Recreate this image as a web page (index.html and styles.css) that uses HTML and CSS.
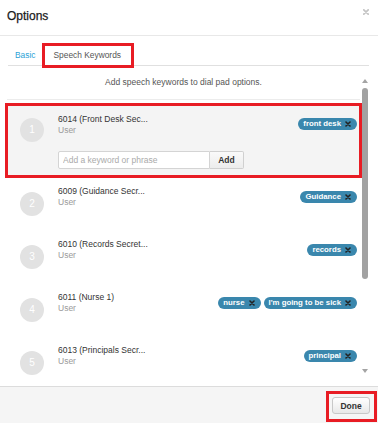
FILE: index.html
```html
<!DOCTYPE html>
<html lang="en">
<head>
<meta charset="utf-8">
<title>Options</title>
<link rel="stylesheet" href="styles.css">
</head>
<body>
<div class="modal">
  <header class="head">
    <h1 class="title">Options</h1>
    <button class="close" aria-label="Close">
      <svg width="6" height="6" viewBox="0 0 6 6"><path d="M0.8 0.8L5.2 5.2M5.2 0.8L0.8 5.2" stroke="#c4c4c4" stroke-width="1.7" stroke-linecap="round"/></svg>
    </button>
  </header>
  <div class="body">
    <nav class="tabs">
      <a class="tab" href="#">Basic</a>
      <a class="tab active" href="#">Speech Keywords</a>
    </nav>
    <div class="pane">
      <div class="list">
        <p class="desc">Add speech keywords to dial pad options.</p>

        <div class="row active">
          <div class="num">1</div>
          <div class="main">
            <div class="top">
              <div class="ident"><div class="name">6014 (Front Desk Sec...</div><div class="type">User</div></div>
              <div class="tags">
                <span class="tag">front desk<svg width="6" height="6" viewBox="0 0 6 6"><path d="M1 1L5 5M5 1L1 5" stroke="#222" stroke-width="1.6" stroke-linecap="round"/></svg></span>
              </div>
            </div>
            <div class="adder">
              <input class="kw" type="text" placeholder="Add a keyword or phrase">
              <button class="add">Add</button>
            </div>
          </div>
        </div>

        <div class="row">
          <div class="num">2</div>
          <div class="main">
            <div class="top">
              <div class="ident"><div class="name">6009 (Guidance Secr...</div><div class="type">User</div></div>
              <div class="tags">
                <span class="tag">Guidance<svg width="6" height="6" viewBox="0 0 6 6"><path d="M1 1L5 5M5 1L1 5" stroke="#222" stroke-width="1.6" stroke-linecap="round"/></svg></span>
              </div>
            </div>
          </div>
        </div>

        <div class="row">
          <div class="num">3</div>
          <div class="main">
            <div class="top">
              <div class="ident"><div class="name">6010 (Records Secret...</div><div class="type">User</div></div>
              <div class="tags">
                <span class="tag">records<svg width="6" height="6" viewBox="0 0 6 6"><path d="M1 1L5 5M5 1L1 5" stroke="#222" stroke-width="1.6" stroke-linecap="round"/></svg></span>
              </div>
            </div>
          </div>
        </div>

        <div class="row">
          <div class="num">4</div>
          <div class="main">
            <div class="top">
              <div class="ident"><div class="name">6011 (Nurse 1)</div><div class="type">User</div></div>
              <div class="tags">
                <span class="tag">nurse<svg width="6" height="6" viewBox="0 0 6 6"><path d="M1 1L5 5M5 1L1 5" stroke="#222" stroke-width="1.6" stroke-linecap="round"/></svg></span>
                <span class="tag">I'm going to be sick<svg width="6" height="6" viewBox="0 0 6 6"><path d="M1 1L5 5M5 1L1 5" stroke="#222" stroke-width="1.6" stroke-linecap="round"/></svg></span>
              </div>
            </div>
          </div>
        </div>

        <div class="row">
          <div class="num">5</div>
          <div class="main">
            <div class="top">
              <div class="ident"><div class="name">6013 (Principals Secr...</div><div class="type">User</div></div>
              <div class="tags">
                <span class="tag">principal<svg width="6" height="6" viewBox="0 0 6 6"><path d="M1 1L5 5M5 1L1 5" stroke="#222" stroke-width="1.6" stroke-linecap="round"/></svg></span>
              </div>
            </div>
          </div>
        </div>
      </div>
      <div class="scrollbar" aria-hidden="true">
        <div class="sb-btn"><span class="arrow-up"></span></div>
        <div class="thumb"></div>
        <div class="sb-space"></div>
        <div class="sb-btn"><span class="arrow-down"></span></div>
      </div>
    </div>
  </div>
  <footer class="foot">
    <div class="mark">
      <button class="done">Done</button>
    </div>
  </footer>
</div>
</body>
</html>
```

FILE: styles.css
```css
* { box-sizing: border-box; }

html, body {
  margin: 0;
  padding: 0;
  background: #fff;
}

body {
  font-family: "Liberation Sans", Arial, sans-serif;
  color: #333;
}

.modal {
  width: 378px;
  height: 423px;
  display: flex;
  flex-direction: column;
  background: #fff;
}

.head {
  height: 36px;
  flex: none;
  border-bottom: 1px solid #e8e8e8;
  display: flex;
  justify-content: space-between;
  align-items: flex-start;
  padding: 0 9px 0 7px;
}

.title {
  margin: 0;
  font-size: 12px;
  font-weight: normal;
  color: #1a1a1a;
  line-height: 14px;
  padding-top: 9px;
  -webkit-text-stroke: 0.25px #1a1a1a;
}

.close {
  border: 0;
  background: none;
  padding: 0;
  margin-top: 9px;
  width: 6px;
  height: 6px;
  display: flex;
}

.body {
  flex: 1;
  padding: 9px 9px 0 5px;
  display: flex;
  flex-direction: column;
}

.tabs {
  display: flex;
  margin-left: 3px;
  border-bottom: 1px solid #e0e0e0;
}

.tab {
  display: block;
  margin-bottom: -1px;
  margin-right: 2px;
  border: 1px solid transparent;
  padding: 4px 6px;
  font-size: 8.4px;
  line-height: 11px;
  color: #2a9fd6;
  text-decoration: none;
}

.tab.active {
  color: #555;
  background: #fff;
  border-color: #e0e0e0 #e0e0e0 #fff;
  padding: 4px 10px 4px 8px;
  outline: 3px solid #e81c24;
  outline-offset: -1px;
}

.pane {
  margin-top: 10px;
  height: 300px;
  display: flex;
}

.list {
  flex: 1;
  overflow: hidden;
}

.desc {
  margin: 0 2px;
  padding: 0 0 11px;
  line-height: 12px;
  font-size: 8.5px;
  color: #555;
  text-align: center;
  border-bottom: 1px solid #ececec;
}

.row {
  display: flex;
  align-items: flex-start;
  border: 3px solid transparent;
  padding: 5px 0 12px 12px;
}

.row.active {
  margin-top: 3px;
  border-color: #e81c24;
  background: #f4f4f4;
  padding: 8px 0 6px 12px;
}

.num {
  flex: none;
  width: 24px;
  height: 24px;
  border-radius: 50%;
  background: #e2e2e2;
  color: #fff;
  font-size: 10px;
  line-height: 24px;
  text-align: center;
  margin-top: 6px;
}

.row.active .num { margin-top: 4px; }

.main {
  flex: 1;
  margin-left: 14px;
  display: flex;
  flex-direction: column;
}

.top {
  display: flex;
  justify-content: space-between;
  align-items: flex-start;
}

.name {
  font-size: 8.5px;
  line-height: 11px;
  color: #333;
}

.type {
  font-size: 8.5px;
  line-height: 11px;
  color: #9a9a9a;
}

.tags {
  display: flex;
  gap: 3px;
  margin-right: 2px;
  margin-top: 5px;
}

.row.active .tags { margin-top: 4px; }

.tag {
  display: flex;
  align-items: center;
  gap: 4px;
  height: 12px;
  padding: 0 6px 0 5px;
  border-radius: 6px;
  background: #3a87ad;
  color: #fff;
  font-size: 7.8px;
  font-weight: bold;
  line-height: 12px;
  white-space: nowrap;
}

.adder {
  display: flex;
  margin-top: 15px;
}

.kw {
  width: 152px;
  height: 18px;
  border: 1px solid #d4d4d4;
  border-radius: 2px 0 0 2px;
  background: #fff;
  padding: 0 4px;
  font-family: "Liberation Sans", Arial, sans-serif;
  font-size: 8.5px;
  color: #333;
  outline: none;
}

.kw::placeholder { color: #aaa; }

.add {
  width: 34px;
  height: 18px;
  border: 1px solid #d0d0d0;
  border-left: 0;
  border-radius: 0 2px 2px 0;
  background: linear-gradient(#fafafa, #ececec);
  font-family: "Liberation Sans", Arial, sans-serif;
  font-size: 8.5px;
  font-weight: bold;
  color: #333;
  padding: 0;
}

.scrollbar {
  flex: none;
  width: 7px;
  display: flex;
  flex-direction: column;
}

.sb-btn {
  height: 10px;
  display: flex;
  align-items: center;
  justify-content: center;
  padding-right: 1px;
}

.arrow-up {
  width: 0;
  height: 0;
  border-left: 3px solid transparent;
  border-right: 3px solid transparent;
  border-bottom: 4px solid #a4a4a4;
}

.arrow-down {
  width: 0;
  height: 0;
  border-left: 3px solid transparent;
  border-right: 3px solid transparent;
  border-top: 4px solid #a4a4a4;
}

.thumb {
  margin-top: 2px;
  width: 6px;
  height: 191px;
  border-radius: 3px;
  background: #a2a2a2;
}

.sb-space { flex: 1; }

.foot {
  flex: none;
  height: 37px;
  border-top: 1px solid #dcdcdc;
  background: #f5f5f5;
  display: flex;
  justify-content: flex-end;
  align-items: flex-end;
  padding: 0 1px 1px 0;
}

.mark {
  border: 3px solid #e81c24;
  padding: 3px 4px 5px 3px;
}

.done {
  display: block;
  width: 38px;
  height: 17px;
  border: 1px solid #c8c8c8;
  border-radius: 3px;
  background: linear-gradient(#ffffff, #e8e8e8);
  font-family: "Liberation Sans", Arial, sans-serif;
  font-size: 8.5px;
  font-weight: bold;
  color: #333;
  padding: 0;
}
```
